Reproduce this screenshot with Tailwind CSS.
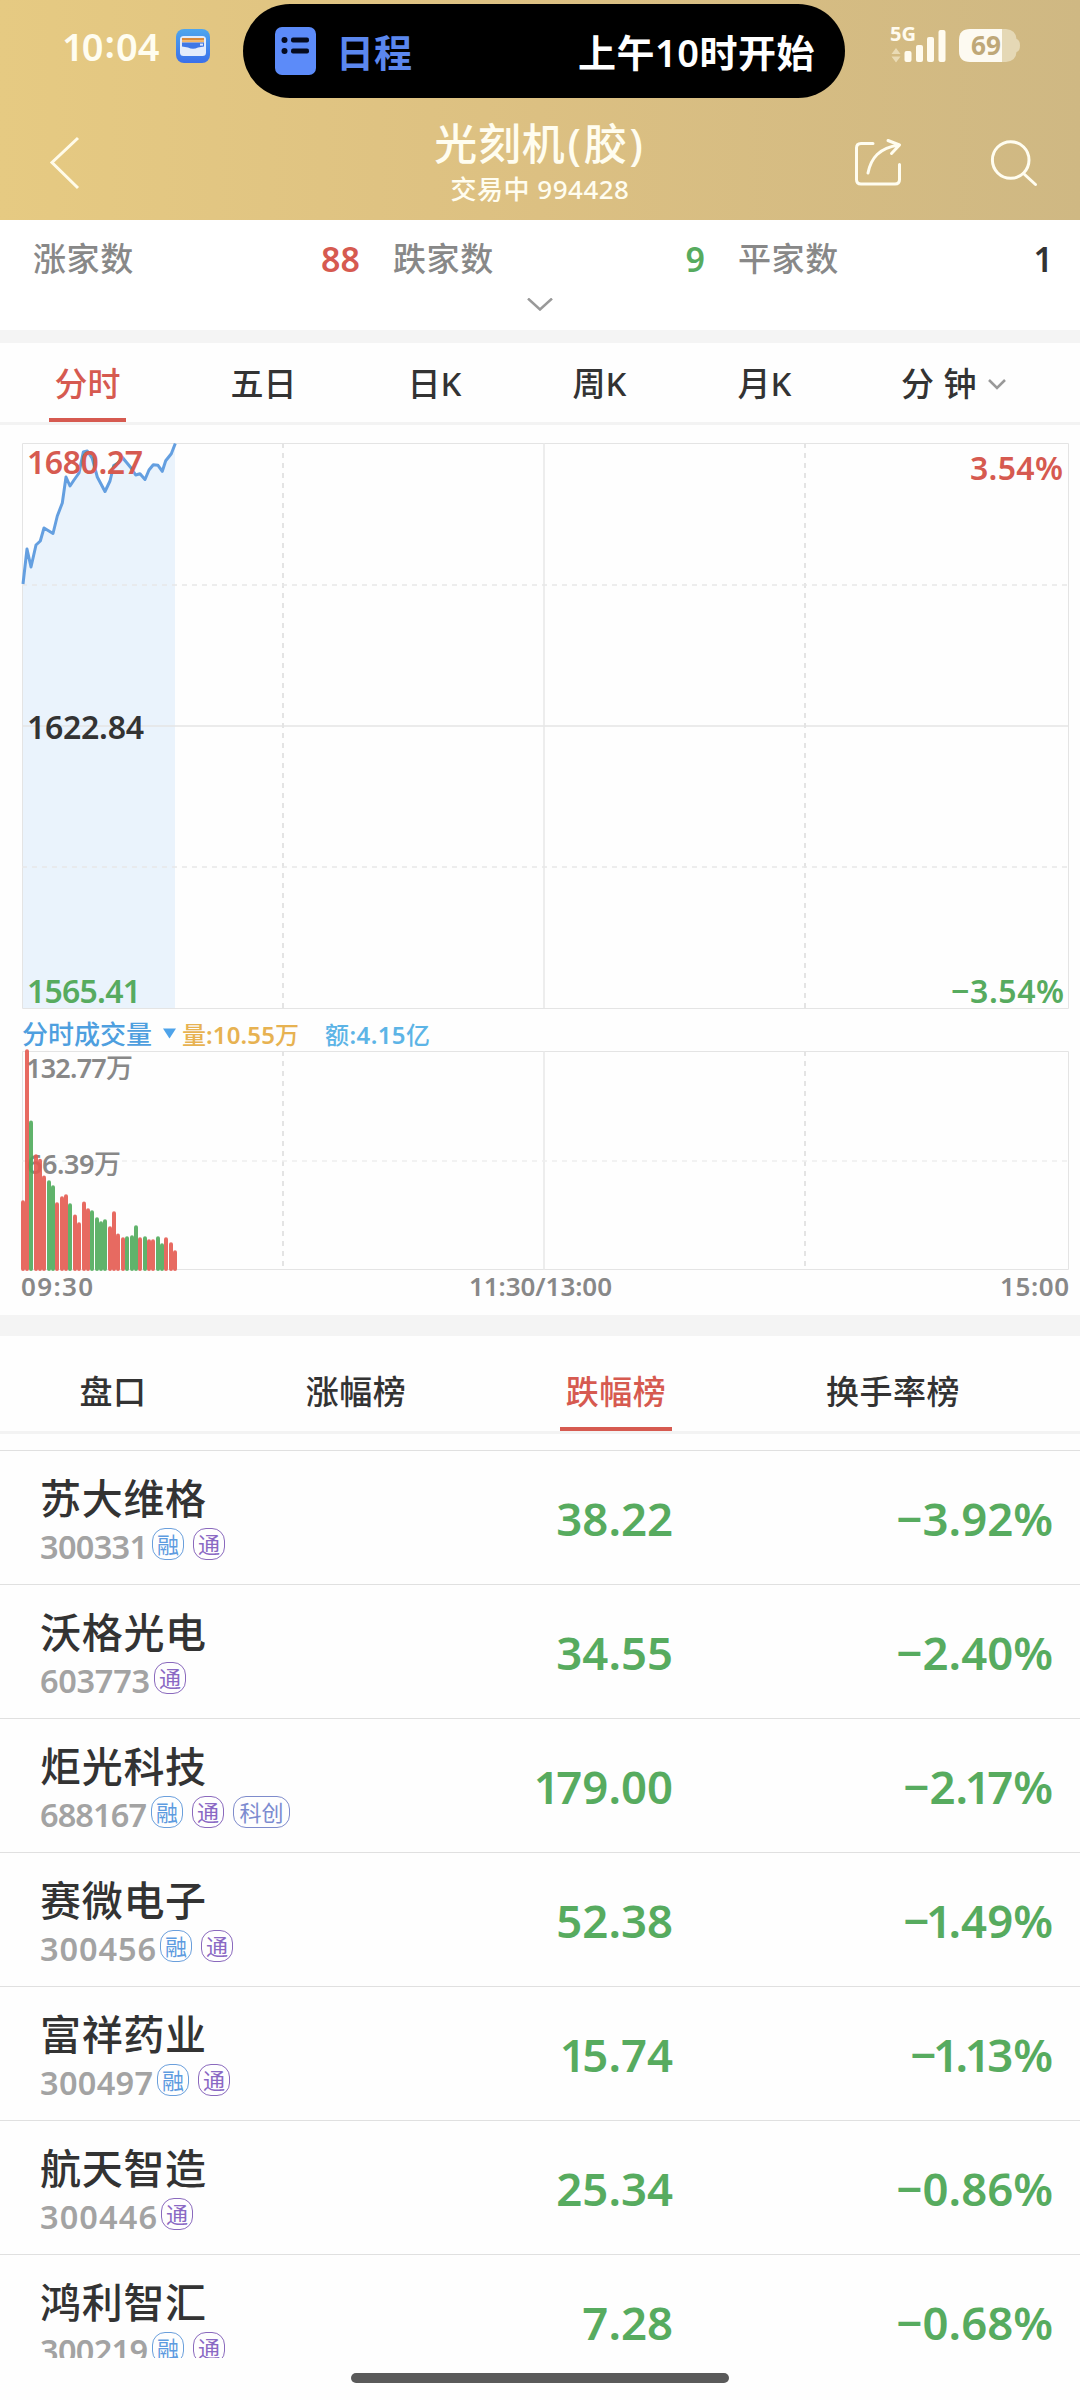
<!DOCTYPE html>
<html lang="zh-CN">
<head>
<meta charset="utf-8">
<title>光刻机(胶) 994428</title>
<script src="https://cdn.jsdelivr.net/npm/@tailwindcss/browser@4"></script>
</head>
<body class="w-[1080px] h-[2400px] overflow-hidden bg-[#fefefe] font-['Noto_Sans','Noto_Sans_CJK_SC',sans-serif] font-medium text-[#333]">
<div class="flex flex-col w-[1080px] h-[2400px]">

  <header class="flex flex-col h-[220px] shrink-0 bg-linear-to-r from-[#e6ca82] via-[#dcc082] to-[#cfb883] text-[#fffdf0]">
    <div class="flex h-[98px]">
      <div class="flex w-[243px] h-[92px] items-center pl-[62px]">
        <span class="w-[114px] text-[38px] leading-none font-semibold"><span class="-mr-[2px]">1</span>0<span class="relative -top-[3px] mx-[1px]">:</span>04</span>
        <svg class="w-[34px] h-[34px]" viewBox="0 0 34 34">
          <defs><linearGradient id="app" x1="0" y1="0" x2="0" y2="1"><stop offset="0" stop-color="#4fa6ee"/><stop offset="1" stop-color="#3a70ea"/></linearGradient></defs>
          <rect width="34" height="34" rx="8" fill="url(#app)"/>
          <rect x="4" y="7" width="26" height="20" rx="3.5" fill="#e3ecfb"/>
          <rect x="6" y="9" width="22" height="2.4" fill="#d98a3d"/>
          <rect x="6" y="11.2" width="22" height="2.2" fill="#f3b765"/>
          <path d="M6 13.4H28V17.5L22 18.5Q17 21 12 18.5L6 17.5Z" fill="#3f78e6"/>
          <rect x="24" y="14.6" width="3" height="2" fill="#dfe9fb"/>
        </svg>
      </div>
      <div class="flex w-[602px] h-[94px] mt-1 rounded-full bg-black items-center pl-[32px] pr-[30px] text-[38px] leading-none font-semibold">
        <svg class="w-[41px] h-[48px]" viewBox="0 0 41 48">
          <rect width="41" height="48" rx="7" fill="#5c8bf9"/>
          <g fill="#050b20"><circle cx="9.500" cy="13" r="3"/><circle cx="9.500" cy="24" r="3"/><rect x="16" y="10.500" width="18" height="5" rx="2"/><rect x="16" y="21.500" width="18" height="5" rx="2"/></g>
        </svg>
        <span class="ml-[20px] mt-[2px] text-[#5b87ee]">日程</span>
        <span class="ml-auto mt-[2px] tracking-[0.500px] text-white">上午10时开始</span>
      </div>
      <div class="flex flex-1 pl-[44px]">
        <svg class="w-[140px] h-[98px]" viewBox="889 0 140 98">
          <text x="890" y="41" font-size="19.500" font-weight="700" textLength="26" lengthAdjust="spacingAndGlyphs" fill="#fffbef">5G</text>
          <g fill="#fffbef"><rect x="904.500" y="51" width="7" height="11" rx="2"/><rect x="916" y="45" width="7" height="17" rx="2"/><rect x="927" y="37" width="7" height="25" rx="2"/><rect x="938.500" y="30" width="7" height="32" rx="2"/></g>
          <path d="M896 48L900.500 54H891.500ZM896 62.500L900.500 56.500H891.500Z" fill="#f2e6c6" fill-opacity=".75"/>
          <path d="M1002 29H1006Q1016 30 1016.500 39Q1020 40 1020 45.500Q1020 51 1016.500 52Q1016 61 1006 62H1002Z" fill="#e5d8b5"/>
          <path d="M1002 29H970Q959 29 959 40V51Q959 62 970 62H1002Z" fill="#fdfaf1"/>
          <text x="971" y="54.500" font-size="27" font-weight="700" textLength="30" lengthAdjust="spacingAndGlyphs" fill="#bfa878">69</text>
        </svg>
      </div>
    </div>
    <div class="flex h-[122px]">
      <svg class="w-[300px] h-[122px]" viewBox="0 98 300 122" fill="none" stroke="#fffbe9" stroke-width="3"><path d="M78 138L52 162.500L78 188"/></svg>
      <div class="flex flex-col w-[480px] items-center">
        <h1 class="mt-[21px] h-[50px] text-[43px] leading-[50px] tracking-[0.800px] whitespace-nowrap">光刻机<span class="mx-[2px]">(</span>胶<span class="mx-[2px]">)</span></h1>
        <p class="mt-[2px] h-[38px] text-[26px] leading-[36px] tracking-[0.500px] whitespace-nowrap">交易中 994428</p>
      </div>
      <svg class="w-[300px] h-[122px]" viewBox="780 98 300 122" fill="none" stroke="#fffdf0" stroke-width="3" stroke-linecap="round">
        <path d="M873 143.500H861Q856.500 143.500 856.500 148V179.500Q856.500 184 861 184H895Q899.500 184 899.500 179.500V164.500"/>
        <path d="M868 173C871 158 879 148 899 145M888 140.500L899.500 145L891.500 153.500" stroke-linejoin="round"/>
        <circle cx="1010.700" cy="160" r="18.300"/><path d="M1023.500 173.500L1035.500 184.500"/>
      </svg>
    </div>
  </header>

  <section class="flex flex-col h-[110px] shrink-0 items-center bg-white">
    <div class="flex w-full h-[78px] pt-[22px] pl-[33px] text-[33px] leading-[34px] text-[#888]">
      <div class="flex w-[327px] h-[34px] items-center justify-between"><span class="tracking-[0.600px]">涨家数</span><b class="font-semibold text-[34px] text-[#d65a50]">88</b></div>
      <div class="flex w-[312px] h-[34px] items-center justify-between ml-[33px]"><span class="tracking-[0.600px]">跌家数</span><b class="font-semibold text-[34px] text-[#57ab5f]">9</b></div>
      <div class="flex w-[315px] h-[34px] items-center justify-between ml-[33px]"><span class="tracking-[0.600px]">平家数</span><b class="font-semibold text-[34px] text-[#333]">1</b></div>
    </div>
    <svg class="w-[26px] h-[13px]" viewBox="0 0 26 13" fill="none" stroke="#999" stroke-width="2.500"><path d="M1 0.500L13 11.500L25 0.500"/></svg>
  </section>
  <div class="h-[13px] shrink-0 bg-[#f4f4f4]"></div>

  <nav class="flex h-[82px] shrink-0 border-b-3 border-[#f3f3f3] text-[33px] leading-[82px] whitespace-nowrap">
    <div class="flex flex-col w-[77px] ml-[49px] h-[79px] items-center text-[#d65a50] border-b-4 border-[#d65a50]">分时</div>
    <div class="w-[77px] ml-[99px] text-center">五日</div>
    <div class="w-[77px] ml-[94px] text-center">日K</div>
    <div class="w-[77px] ml-[88px] text-center">周K</div>
    <div class="w-[77px] ml-[88px] text-center">月K</div>
    <div class="flex h-[82px] ml-[98px] items-center"><span class="tracking-[0.500px]">分 钟</span><svg class="w-[18px] h-[11px] ml-[11px]" viewBox="0 0 18 11" fill="none" stroke="#999" stroke-width="2.500"><path d="M1 1L9 9L17 1"/></svg></div>
  </nav>

  <svg id="chart" class="w-[1080px] h-[890px] shrink-0 block" viewBox="0 425 1080 890" font-weight="600">
    <path d="M23 584L27 549L31 567L36 545L40.300 541L44 528L53 533.500L57.300 516L62.300 503L66 477L70 486L74 480L79 473L83.300 452L87.300 451L92.300 458.500L97.300 477L105 491.500L110 481L113.700 465.500L118 463L122.700 457.700L130.700 467.500L135.700 475L140 473.700L145 479.500L149 470L153.300 464.700L158 465.300L162.300 471.300L165.700 460.700L171.300 453.700L175 443.500V1008H22V584Z" fill="#eaf3fc"/>
    <g fill="none" stroke="#e4e4e4">
      <path d="M22.500 443.500H1068.500V1008.500H22.500ZM22.500 1051.500H1068.500V1269.500H22.500Z"/>
      <path d="M22 726H1068" stroke-width="1.500"/>
      <path d="M544 443V1008M544 1051V1270" stroke="#e8e8e8" stroke-width="1.500"/>
      <path d="M283 443V1008M805 443V1008M283 1051V1270M805 1051V1270" stroke-width="2" stroke-dasharray="5 5"/>
      <path d="M22 585H1068M22 867H1068" stroke="#e8e8e8" stroke-width="1.500" stroke-dasharray="5 5"/>
      <path d="M22 1161H1068" stroke="#eee" stroke-width="1.500" stroke-dasharray="5 5"/>
    </g>
    <path d="M23 584L27 549L31 567L36 545L40.300 541L44 528L53 533.500L57.300 516L62.300 503L66 477L70 486L74 480L79 473L83.300 452L87.300 451L92.300 458.500L97.300 477L105 491.500L110 481L113.700 465.500L118 463L122.700 457.700L130.700 467.500L135.700 475L140 473.700L145 479.500L149 470L153.300 464.700L158 465.300L162.300 471.300L165.700 460.700L171.300 453.700L175.300 443.500" fill="none" stroke="#649fe0" stroke-width="3" stroke-linejoin="round"/>
    <g font-size="32">
      <text x="27" y="474" textLength="116" fill="#d65a50">1680.27</text>
      <text x="27" y="739" textLength="117" fill="#333">1622.84</text>
      <text x="27" y="1003" textLength="114" fill="#57ab5f">1565.41</text>
      <text x="970" y="480" textLength="93" fill="#d65a50">3.54%</text>
      <text x="951" y="1003" textLength="113" fill="#57ab5f">−3.54%</text>
    </g>
    <text x="22" y="1043.500" font-size="26" font-weight="500" textLength="130" fill="#4e9fdf">分时成交量</text>
    <path d="M163 1028.500H176L169.500 1038.500Z" fill="#4ea3ea"/>
    <g font-size="24">
      <text x="182" y="1044" textLength="117" fill="#e7b251"><tspan font-weight="500">量</tspan>:10.55<tspan font-weight="500">万</tspan></text>
      <text x="325" y="1044" textLength="105" fill="#5cb4e6"><tspan font-weight="500">额</tspan>:4.15<tspan font-weight="500">亿</tspan></text>
    </g>
    <g fill="#888">
      <text x="26" y="1077.500" font-size="27" textLength="107">132.77<tspan font-weight="500">万</tspan></text>
      <text x="27" y="1174" font-size="27" textLength="94">66.39<tspan font-weight="500">万</tspan></text>
      <g font-size="26">
        <text x="21" y="1296" textLength="72">09:30</text>
        <text x="469" y="1296" textLength="143">11:30/13:00</text>
        <text x="1000" y="1296" textLength="69">15:00</text>
      </g>
    </g>
    <g id="bars" stroke-width="4" stroke-linecap="round" stroke-opacity=".9"></g>
  </svg>
  <div class="h-[21px] shrink-0 bg-[#f4f4f4]"></div>

  <nav class="flex h-[98px] shrink-0 border-b-3 border-[#f3f3f3] text-[33px] leading-[112px] tracking-[0.500px] whitespace-nowrap">
    <div class="w-[112px] ml-[57px] text-center">盘口</div>
    <div class="w-[112px] ml-[131px] text-center">涨幅榜</div>
    <div class="w-[112px] h-[95px] ml-[148px] text-center text-[#d65a50] border-b-4 border-[#d65a50]">跌幅榜</div>
    <div class="w-[140px] ml-[151px] text-center">换手率榜</div>
  </nav>

  <main id="list" class="mt-4 h-[908px] shrink-0 overflow-hidden"></main>
  <div class="mt-[15px] mx-auto w-[378px] h-[10px] shrink-0 rounded-full bg-[#5a5a5a]"></div>
</div>

<script>
  // one-minute volume bars: [x, top, direction]
  const R = '#e45a50', G = '#4fab5b';
  const bars = [[69,722,R],[81,269,R],[93,483,G],[108,584,R],[120,598,R],[132,648,R],[147,662,G],[159,677,G],[171,728,R],[186,710,R],[198,704,R],[210,731,G],[225,765,R],[237,788,R],[252,726,R],[264,746,R],[276,752,G],[291,773,G],[303,785,G],[315,779,G],[330,800,R],[342,755,R],[354,822,R],[369,833,R],[381,830,G],[396,827,G],[408,797,G],[420,833,R],[435,830,G],[447,839,R],[459,839,R],[474,830,G],[486,851,G],[498,833,R],[513,848,R],[525,872,R]];
  document.getElementById('bars').innerHTML = bars.map(([x, t, c]) =>
    `<path d="M${x / 3} ${t / 3 + 961.5}V1269" stroke="${c}"/>`).join('');

  // name, code, code width, badges, price, change
  const rows = [
    ['苏大维格', '300331', 108, ['融', '通'], '38.22', '−3.92%'],
    ['沃格光电', '603773', 110, ['通'], '34.55', '−2.40%'],
    ['炬光科技', '688167', 107, ['融', '通', '科创'], '179.00', '−2.17%'],
    ['赛微电子', '300456', 116, ['融', '通'], '52.38', '−1.49%'],
    ['富祥药业', '300497', 113, ['融', '通'], '15.74', '−1.13%'],
    ['航天智造', '300446', 117, ['通'], '25.34', '−0.86%'],
    ['鸿利智汇', '300219', 108, ['融', '通'], '7.28', '−0.68%'],
  ];
  const badge = {
    '融': 'w-8 border-[#6a9fdc] text-[#5d9be0]',
    '通': 'w-8 border-[#8a69bd] text-[#8a69c4]',
    '科创': 'w-[57px] border-[#7e8bcb] text-[#7c8bd0]',
  };
  // the digit one is set narrower than the others
  const figure = s => s.replace(/1/g, '<span class="-mx-[3.500px]">1</span>');
  document.getElementById('list').innerHTML = rows.map(([n, c, w, b, p, d]) => `
    <div class="flex h-[134px] border-t border-[#e0e0e0] pl-[40px] pr-[27px]">
      <div class="flex flex-col w-[300px] pt-[22px]">
        <div class="h-[50px] text-[41px] leading-[50px] tracking-[0.700px]">${n}</div>
        <div class="flex h-[36px] items-start mt-[5px]">
          <svg class="h-[36px] shrink-0 overflow-visible" style="width:${w + 4}px" viewBox="0 0 ${w + 4} 36"><text x="0" y="31" font-size="32.500" font-weight="600" fill="#a3a3a3" textLength="${w}">${c}</text></svg>
          <div class="flex gap-[9px]">${b.map(t => `<span class="flex h-8 items-center justify-center rounded-[13px] border-[1.500px] text-[22px] leading-none font-normal ${badge[t]}">${t}</span>`).join('')}</div>
        </div>
      </div>
      <div class="w-[333px] pt-[35px] text-right text-[45.500px] leading-[64px] font-semibold text-[#57ab5f]">${figure(p)}</div>
      <div class="flex-1 pt-[35px] text-right text-[45.500px] leading-[64px] font-semibold text-[#57ab5f]">${figure(d)}</div>
    </div>`).join('');
</script>
</body>
</html>
